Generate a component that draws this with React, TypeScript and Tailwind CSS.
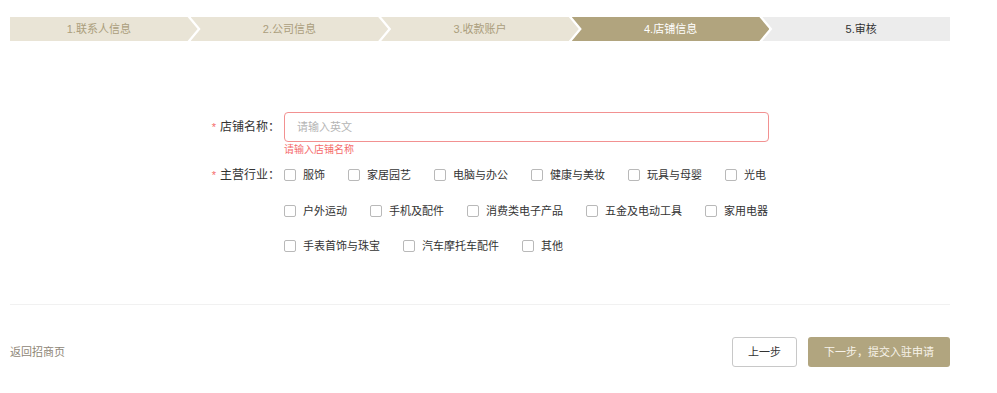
import React from "react";

const steps = [
  { label: "1.联系人信息", cls: "bg-[#e9e4d6] text-[#ab9e7c] pr-[10px] [clip-path:polygon(0_0,calc(100%_-_10px)_0,100%_50%,calc(100%_-_10px)_100%,0_100%)]" },
  { label: "2.公司信息", cls: "bg-[#e9e4d6] text-[#ab9e7c] px-[10px] -ml-[7px] [clip-path:polygon(0_0,calc(100%_-_10px)_0,100%_50%,calc(100%_-_10px)_100%,0_100%,10px_50%)]" },
  { label: "3.收款账户", cls: "bg-[#e9e4d6] text-[#ab9e7c] px-[10px] -ml-[7px] [clip-path:polygon(0_0,calc(100%_-_10px)_0,100%_50%,calc(100%_-_10px)_100%,0_100%,10px_50%)]" },
  { label: "4.店铺信息", cls: "bg-[#b1a47e] text-white px-[10px] -ml-[7px] [clip-path:polygon(0_0,calc(100%_-_10px)_0,100%_50%,calc(100%_-_10px)_100%,0_100%,10px_50%)]" },
  { label: "5.审核", cls: "bg-[#ececec] text-[#333] pl-[10px] -ml-[7px] [clip-path:polygon(0_0,100%_0,100%_100%,0_100%,10px_50%)]" },
];

const rows = [
  ["服饰", "家居园艺", "电脑与办公", "健康与美妆", "玩具与母婴", "光电"],
  ["户外运动", "手机及配件", "消费类电子产品", "五金及电动工具", "家用电器"],
  ["手表首饰与珠宝", "汽车摩托车配件", "其他"],
];

function Check({ label }: { label: string }) {
  return (
    <label className="flex items-center mr-[23px] cursor-pointer">
      <span className="w-[12px] h-[12px] border border-[#b9b9b9] rounded-[2px] bg-white shrink-0" />
      <span className="ml-[7px] text-[11px] leading-[20px] text-[#333]">{label}</span>
    </label>
  );
}

export default function App() {
  return (
    <div
      className="w-[997px] h-[393px] bg-white overflow-hidden"
      style={{ fontFamily: '"Liberation Sans", "Noto Sans CJK SC", sans-serif' }}
    >
      <div className="ml-[10px] w-[940px]">
        <div className="mt-[17px] flex h-[24px]">
          {steps.map((s) => (
            <div
              key={s.label}
              className={`flex-1 h-full flex items-center justify-center text-[11px] ${s.cls}`}
            >
              {s.label}
            </div>
          ))}
        </div>

        <div className="mt-[71px]">
          <div className="flex">
            <div className="w-[274px] h-[30px] flex items-center justify-end pr-[4px] text-[12px] text-[#333]">
              <span className="text-[#f56c6c] mr-[4px] text-[11px]">*</span>
              店铺名称：
            </div>
            <div className="w-[485px] h-[30px] border border-[#f29191] rounded-[4px] flex items-center pl-[12px] text-[11px] text-[#b5b5b5]">
              请输入英文
            </div>
          </div>
          <div className="pl-[274px] h-[14px] mt-[1px] text-[10px] leading-[14px] text-[#f56c6c]">
            请输入店铺名称
          </div>

          <div className="flex mt-[8px]">
            <div className="w-[274px] h-[20px] flex items-center justify-end pr-[4px] text-[12px] text-[#333]">
              <span className="text-[#f56c6c] mr-[4px] text-[11px]">*</span>
              主营行业：
            </div>
            <div className="flex flex-col">
              <div className="flex h-[20px]">
                {rows[0].map((l) => (
                  <Check key={l} label={l} />
                ))}
              </div>
              <div className="flex h-[20px] mt-[16px]">
                {rows[1].map((l) => (
                  <Check key={l} label={l} />
                ))}
              </div>
              <div className="flex h-[20px] mt-[15px]">
                {rows[2].map((l) => (
                  <Check key={l} label={l} />
                ))}
              </div>
            </div>
          </div>
        </div>

        <div className="mt-[48px] h-px bg-[#f1f1f1]" />

        <div className="mt-[32px] flex items-center justify-between h-[30px]">
          <a className="text-[11px] text-[#8e8676]">返回招商页</a>
          <div className="flex items-center gap-[11px]">
            <button className="w-[65px] h-[30px] border border-[#c8c8c8] rounded-[3px] bg-white text-[11px] text-[#333]">
              上一步
            </button>
            <button className="w-[142px] h-[30px] rounded-[3px] bg-[#b1a57f] text-[11px] text-[#f7f3ea]">
              下一步，提交入驻申请
            </button>
          </div>
        </div>
      </div>
    </div>
  );
}
